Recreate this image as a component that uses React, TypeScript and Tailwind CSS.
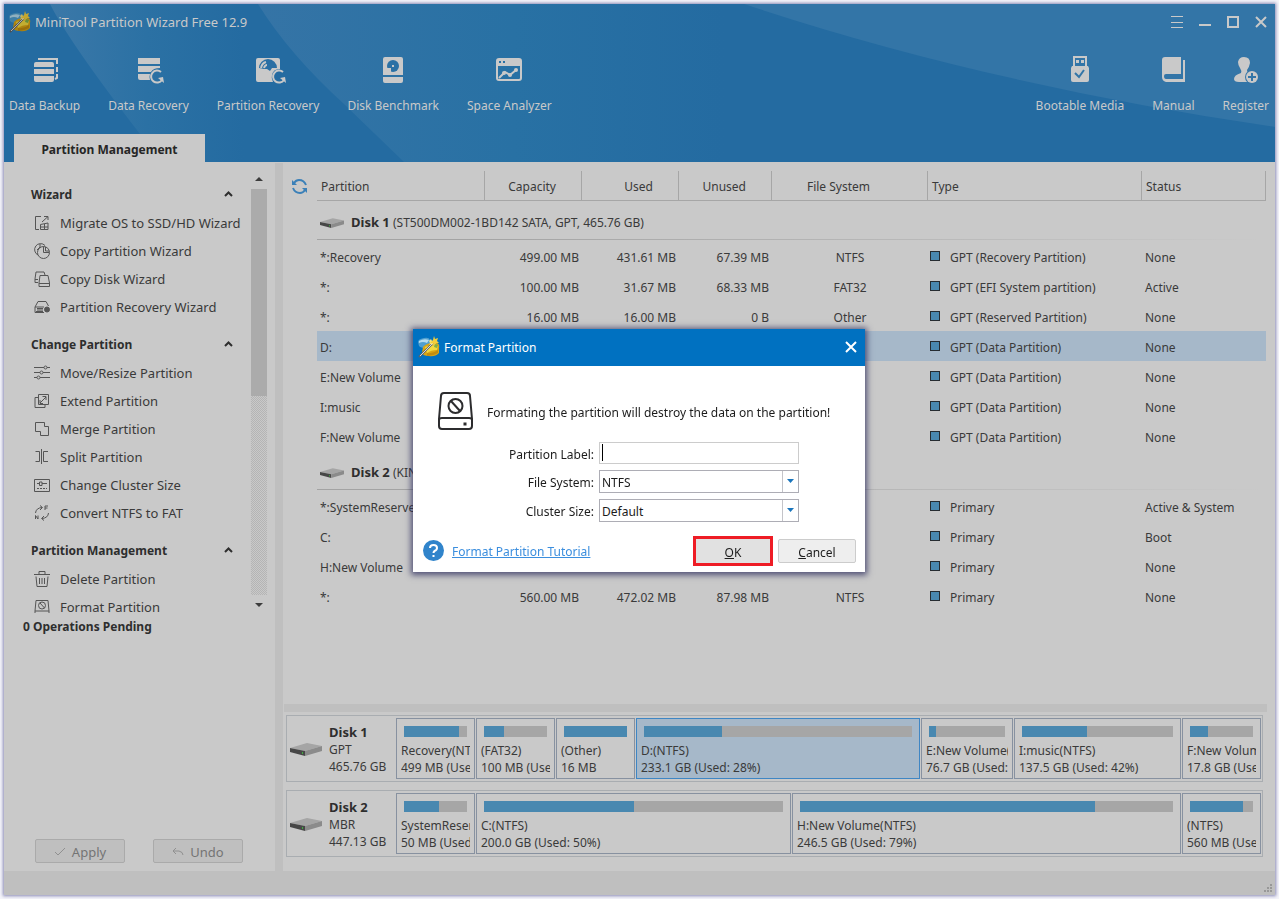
import { ReactNode } from "react";

const line = {
  fill: "none",
  stroke: "currentColor",
  strokeWidth: 1,
} as const;

/* ---------- logo ---------- */

function Logo() {
  return (
    <svg width="22" height="22" viewBox="0 0 22 22" className="shrink-0" aria-hidden="true">
      <path d="M0 6Q0 3 6 2Q11 1 12 4V9L8 12Q3 12 1 10Z" fill="#4f9fcf" />
      <path d="M1 5Q6 2 11 4L9 7Q5 5 1 7Z" fill="#b4dcef" />
      <path d="M5 11Q10 6 19 7Q22 8 21 12L21 17Q17 21 11 20Q5 20 4 17Z" fill="#d9a514" />
      <path d="M7 11Q13 8 20 10L19 14Q13 14 9 17Z" fill="#f3d93f" />
      <path d="M9 17Q15 18 20 14L20 17Q15 20 9 20Z" fill="#c08c10" />
      <path d="M1 21L15 7" stroke="#5f6468" strokeWidth="2" />
      <path d="M2 20L14 8" stroke="#d5dade" strokeWidth="1" />
      <path d="M11 5L13 3L14 5L16 5L15 7L16 9L13 8L11 9L12 7Z" fill="#f6e27a" />
      <path d="M16 0L17 3L20 2L19 5L21 7L18 7L17 10L15 7L12 7L15 4Z" fill="#f3cf3c" />
      <path d="M17 8L20 9L19 12L16 11Z" fill="#7fb04a" />
    </svg>
  );
}

/* ---------- toolbar ---------- */

const toolIcon: Record<string, ReactNode> = {
  backup: (
    <>
      <path d="M3 8Q3 6 5 6H21Q23 6 23 8V11H3ZM3 13H23V18H3ZM3 20H23V24Q23 26 21 26H5Q3 26 3 24Z" fill="#c9c9c9" />
      <path d="M7 3H26V8M26 11V16M26 18V22L24 23" fill="none" stroke="#c9c9c9" strokeWidth="2" />
    </>
  ),
  recovery: (
    <>
      <path d="M3 2H25V8H3ZM3 10H25V12Q18 12 16 16H3ZM3 18H15Q14 21 15 24H5Q3 24 3 22Z" fill="#c9c9c9" />
      <path d="M26 16A6 6 0 1 0 27 24" fill="none" stroke="#c9c9c9" strokeWidth="2" />
      <path d="M29 27L28 21L23 22Z" fill="#c9c9c9" />
    </>
  ),
  partition: (
    <>
      <path d="M4 2H24Q26 2 26 4V13Q19 13 18 19Q17 22 19 26H4Q2 26 2 24V4Q2 2 4 2Z" fill="#c9c9c9" />
      <path d="M5 12A9 9 0 0 1 23 12H18L16 15L13 13L10 13Z" fill="#2a6fa4" />
      <path d="M7 12Q8 7 12 6M10 12Q11 9 13 9" fill="none" stroke="#c9c9c9" strokeWidth="2" />
      <path d="M29 16A6 6 0 1 0 30 24" fill="none" stroke="#c9c9c9" strokeWidth="2" />
      <path d="M32 27L31 21L26 22Z" fill="#c9c9c9" />
    </>
  ),
  benchmark: (
    <>
      <path d="M6 1H22Q24 1 24 3V19H4V3Q4 1 6 1ZM4 21H24V25Q24 27 22 27H6Q4 27 4 25Z" fill="#c9c9c9" />
      <circle cx="14" cy="10" r="6" fill="#2b71a5" />
      <path d="M8 12H12V16H8Z" fill="#c9c9c9" />
      <rect x="13" y="9" width="2" height="2" fill="#c9c9c9" />
    </>
  ),
  analyzer: (
    <>
      <rect x="2" y="3" width="24" height="21" rx="2" fill="none" stroke="#c9c9c9" strokeWidth="2" />
      <path d="M2 3H26V10H2Z" fill="#c9c9c9" />
      <path d="M4 5H6V7H4ZM8 5H10V7H8Z" fill="#2870a4" />
      <path d="M4 22L10 16L15 19L21 14" fill="none" stroke="#c9c9c9" strokeWidth="2" />
      <circle cx="9" cy="17" r="2" fill="#c9c9c9" />
      <circle cx="15" cy="19" r="2" fill="#c9c9c9" />
      <circle cx="21" cy="14" r="2" fill="#c9c9c9" />
    </>
  ),
  usb: (
    <>
      <path d="M7 0H21V10H7Z" fill="#c9c9c9" />
      <path d="M9 2H19V10H9Z" fill="#3375a7" />
      <path d="M10 4H13V7H10ZM15 4H18V7H15Z" fill="#c9c9c9" />
      <path d="M6 10H22L23 12V24Q23 26 21 26H7Q5 26 5 24V12Z" fill="#c9c9c9" />
      <path d="M9 17L13 21L18 14" fill="none" stroke="#3375a7" strokeWidth="2" />
    </>
  ),
  manual: (
    <>
      <path d="M6 1H22V18H7Q5 18 5 20Q5 23 7 23H24V4H26V26H7Q3 25 3 21V4Q3 1 6 1Z" fill="#c9c9c9" />
      <path d="M23 1V23M6 21H23" fill="none" stroke="#3375a7" strokeWidth="2" />
    </>
  ),
  register: (
    <>
      <path d="M12 1Q18 1 18 7Q17 12 15 14Q15 17 18 17L16 26H7Q2 26 2 23Q2 19 9 17Q10 15 8 12Q6 9 6 6Q7 1 12 1Z" fill="#c9c9c9" />
      <circle cx="20" cy="21" r="7" fill="#3375a7" />
      <circle cx="20" cy="21" r="6" fill="#c9c9c9" />
      <path d="M20 17V25M16 21H24" stroke="#3375a7" strokeWidth="2" />
    </>
  ),
};

function Tool({ icon, label }: { icon: string; label: string }) {
  return (
    <button type="button" className="flex flex-col items-center gap-3 whitespace-nowrap">
      <svg width="28" height="28" viewBox="0 0 28 28" className="overflow-visible" aria-hidden="true">
        {toolIcon[icon]}
      </svg>
      <span className="leading-5">{label}</span>
    </button>
  );
}

function HeaderBackdrop() {
  return (
    <svg
      className="pointer-events-none absolute inset-0 h-full w-full"
      viewBox="0 0 1271 158"
      preserveAspectRatio="none"
      aria-hidden="true"
    >
      <defs>
        <linearGradient id="rayLeft" x1="0" x2="1" y1="0" y2="0">
          <stop offset="0" stopColor="#3b78a8" />
          <stop offset="0.5" stopColor="#2b71a4" />
          <stop offset="1" stopColor="#246ba1" />
        </linearGradient>
        <linearGradient id="rayMid" x1="0" x2="1" y1="0" y2="0">
          <stop offset="0" stopColor="#3574a6" />
          <stop offset="0.55" stopColor="#2871a4" />
          <stop offset="1" stopColor="#246ba1" />
        </linearGradient>
      </defs>
      <rect width="1271" height="158" fill="#246ba1" />
      <path d="M46 0Q66 40 146 143L150 158H240V0Z" fill="url(#rayLeft)" />
      <path d="M254 0Q285 50 340 100L400 158H720V0Z" fill="url(#rayMid)" />
      <path d="M740 0Q980 80 1271 123V0Z" fill="#3375a7" />
    </svg>
  );
}

function Header() {
  return (
    <header className="relative bg-[#246ba1] text-[#c9c9c9]">
      <HeaderBackdrop />
      <div className="relative">
        <div className="flex h-9 items-center pr-2 pl-[5px]">
          <span className="brightness-80">
            <Logo />
          </span>
          <h1 className="ml-1 flex-1 pt-[2px] text-[13px]">MiniTool Partition Wizard Free 12.9</h1>
          <div className="flex items-center gap-4">
            <button type="button" aria-label="Menu">
              <svg width="12" height="12" viewBox="0 0 12 12" {...line}>
                <path d="M0 .5H12M0 6.500H12M0 11.500H12" />
              </svg>
            </button>
            <button type="button" aria-label="Minimize">
              <svg width="12" height="12" viewBox="0 0 12 12" {...line}>
                <path d="M0 9H12" strokeWidth="2" />
              </svg>
            </button>
            <button type="button" aria-label="Maximize">
              <svg width="12" height="12" viewBox="0 0 12 12" {...line}>
                <path d="M1 1H11V11H1Z" strokeWidth="2" />
              </svg>
            </button>
            <button type="button" aria-label="Close">
              <svg width="12" height="12" viewBox="0 0 12 12" {...line}>
                <path d="M1 1L11 11M11 1L1 11" strokeWidth="2" />
              </svg>
            </button>
          </div>
        </div>
        <nav className="flex justify-between pt-4 pr-[6px] pl-[5px]">
          <div className="flex gap-7">
            <Tool icon="backup" label="Data Backup" />
            <Tool icon="recovery" label="Data Recovery" />
            <Tool icon="partition" label="Partition Recovery" />
            <Tool icon="benchmark" label="Disk Benchmark" />
            <Tool icon="analyzer" label="Space Analyzer" />
          </div>
          <div className="flex gap-7">
            <Tool icon="usb" label="Bootable Media" />
            <Tool icon="manual" label="Manual" />
            <Tool icon="register" label="Register" />
          </div>
        </nav>
        <div className="mt-[18px] flex px-[10px]">
          <button type="button" className="h-7 w-[191px] bg-[#c9c9c9] pt-1 font-bold text-[#262626]">
            Partition Management
          </button>
        </div>
      </div>
    </header>
  );
}

/* ---------- sidebar ---------- */

const sideIcon: Record<string, ReactNode> = {
  migrate: <path d="M7 1.500H1.500V14.500H5M8 7L14 1.500M10 1.500H14V5M6.500 9.500L14 8V14.500H6.500ZM6.500 12H14M10.500 9V14.500" />,
  copyPartition: (
    <>
      <path d="M4 12A6 6 0 1 1 11 2.500M6 1V4L3 7" />
      <circle cx="9.500" cy="9.500" r="6" />
      <path d="M9.500 3.500V9.500H15M11.500 4V8H15" />
    </>
  ),
  copyDisk: <path d="M4 11.500H1V8L2 1H10L11 4M1 8.500H4M6 4.500H14L15.500 12V15.500H5V12ZM5 12.500H15.500" />,
  recoveryDrive: (
    <>
      <path d="M1 8L4 2.500H12L14.500 7M1 8H10M1 8V13.500H10M3 11H9M3 9.500H9" />
      <circle cx="13" cy="10.500" r="2.500" fill="currentColor" />
      <path d="M2 12.500H9" />
    </>
  ),
  move: (
    <>
      <path d="M0 2.500H10M13 2.500H16M0 7.500H6M9 7.500H16M0 12.500H3M6 12.500H16" />
      <circle cx="11.500" cy="2.500" r="1.500" />
      <circle cx="7.500" cy="7.500" r="1.500" />
      <circle cx="4.500" cy="12.500" r="1.500" />
    </>
  ),
  extend: <path d="M4 4.500H1V14.500H11V11M4.500 11.500V1.500H14.500V11.500H8M4.500 11.500H8M6 10L12 4M8.500 3.500H12V7M6 7V10.500H9" />,
  merge: <path d="M1.500 1.500H10.500V5.500H14.500V14.500H6.500V10.500H1.500Z" />,
  split: <path d="M7.500 0V15M1.500 2.500H5.500V12.500H1.500M14 2.500H9.500V12.500H14" />,
  cluster: (
    <>
      <path d="M.5 2.500H15.500V14.500H.5ZM3 6.500H5M8 6.500H13M5.500 5H8V8.500H5.500Z" />
      <path d="M3 11.500H13" strokeDasharray="2 1" />
    </>
  ),
  convert: (
    <>
      <path d="M1.500 8Q2 3 8 2.500M6 .5L8.500 2.500L6 5M14.500 8Q14 13 8 13.500M10 11L7.500 13.500L10 15.500" />
      <path d="M11 5V1H14M11 3H13.500M1.500 14V10.500L4 14V10.500" />
    </>
  ),
  trash: <path d="M0 3.500H16M5 3V.5H11V3M2 5.500L3 15.500H13L14 5.500M5.500 7V13M8 7V13M10.500 7V13" />,
  format: (
    <>
      <path d="M1 12L2 1.500H14L15 12V18H1ZM1 12H15M12 15.500H13.500" />
      <circle cx="8" cy="6.500" r="3.500" />
      <path d="M6 4L10.500 9" />
    </>
  ),
};

const sections = [
  {
    title: "Wizard",
    items: [
      ["migrate", "Migrate OS to SSD/HD Wizard"],
      ["copyPartition", "Copy Partition Wizard"],
      ["copyDisk", "Copy Disk Wizard"],
      ["recoveryDrive", "Partition Recovery Wizard"],
    ],
  },
  {
    title: "Change Partition",
    items: [
      ["move", "Move/Resize Partition"],
      ["extend", "Extend Partition"],
      ["merge", "Merge Partition"],
      ["split", "Split Partition"],
      ["cluster", "Change Cluster Size"],
      ["convert", "Convert NTFS to FAT"],
    ],
  },
  {
    title: "Partition Management",
    items: [
      ["trash", "Delete Partition"],
      ["format", "Format Partition"],
    ],
  },
];

function Sidebar() {
  return (
    <aside className="flex w-[271px] shrink-0 flex-col">
      <div className="flex h-[450px] pt-2 pr-2">
        <div className="flex flex-1 flex-col gap-2 overflow-hidden pt-2 pl-[27px]">
          {sections.map((s) => (
            <section key={s.title} className="shrink-0">
              <h2 className="flex h-[30px] items-center justify-between pr-[18px] font-bold text-[#2e2e2e]">
                <span className="pt-[2px]">{s.title}</span>
                <svg width="9" height="9" viewBox="0 0 9 9" fill="none" stroke="#2e2e2e" strokeWidth="2" aria-hidden="true">
                  <path d="M1 6L4.500 2.500L8 6" />
                </svg>
              </h2>
              <ul className="text-[13px]">
                {s.items.map(([icon, label]) => (
                  <li key={label}>
                    <button type="button" className="flex h-7 items-center gap-[10px] pl-[3px] whitespace-nowrap">
                      <svg width="16" height="16" viewBox="0 0 16 16" className="overflow-visible text-[#555]" {...line} aria-hidden="true">
                        {sideIcon[icon]}
                      </svg>
                      <span className="pt-[2px]">{label}</span>
                    </button>
                  </li>
                ))}
              </ul>
            </section>
          ))}
        </div>
        <div className="flex w-4 flex-col" aria-hidden="true">
          <svg width="16" height="18" viewBox="0 0 16 18" className="shrink-0">
            <path d="M4 10L8 6L12 10Z" fill="#3c3c3c" />
          </svg>
          <div className="h-[207px] bg-[#ababab]" />
          <div className="flex-1 bg-[repeating-conic-gradient(#b4b4b4_0_25%,#c9c9c9_0_50%)] bg-[length:2px_2px]" />
          <svg width="16" height="18" viewBox="0 0 16 18" className="shrink-0">
            <path d="M4 8L8 12L12 8Z" fill="#3c3c3c" />
          </svg>
        </div>
      </div>
      <p className="pt-1 pl-[19px] leading-5 font-bold text-[#2e2e2e]">0 Operations Pending</p>
      <div className="mt-auto flex gap-7 pb-2 pl-[31px] text-[13px] text-[#747474]">
        <button type="button" className="flex h-6 w-[90px] items-center justify-center gap-[6px] rounded-xs border border-[#aaa] bg-[#bfbfbf] pt-1">
          <svg width="12" height="12" viewBox="0 0 12 12" fill="none" stroke="#909090" strokeWidth="1" aria-hidden="true">
            <path d="M1 5L4 8L11 1" />
          </svg>
          Apply
        </button>
        <button type="button" className="flex h-6 w-[90px] items-center justify-center gap-[6px] rounded-xs border border-[#aaa] bg-[#bfbfbf] pt-1">
          <svg width="12" height="12" viewBox="0 0 12 12" fill="none" stroke="#909090" strokeWidth="1" aria-hidden="true">
            <path d="M4 1L1 4L4 7M1 4H7Q11 5 11 8" />
          </svg>
          Undo
        </button>
      </div>
    </aside>
  );
}

/* ---------- partition table ---------- */

type Row = [name: string, capacity: string, used: string, unused: string, fs: string, type: string, status: string];

const disks: { name: string; info: string; rows: Row[] }[] = [
  {
    name: "Disk 1",
    info: "(ST500DM002-1BD142 SATA, GPT, 465.76 GB)",
    rows: [
      ["*:Recovery", "499.00 MB", "431.61 MB", "67.39 MB", "NTFS", "GPT (Recovery Partition)", "None"],
      ["*:", "100.00 MB", "31.67 MB", "68.33 MB", "FAT32", "GPT (EFI System partition)", "Active"],
      ["*:", "16.00 MB", "16.00 MB", "0 B", "Other", "GPT (Reserved Partition)", "None"],
      ["D:", "", "", "", "", "GPT (Data Partition)", "None"],
      ["E:New Volume", "", "", "", "", "GPT (Data Partition)", "None"],
      ["I:music", "", "", "", "", "GPT (Data Partition)", "None"],
      ["F:New Volume", "", "", "", "", "GPT (Data Partition)", "None"],
    ],
  },
  {
    name: "Disk 2",
    info: "(KIN",
    rows: [
      ["*:SystemReserved", "", "", "", "", "Primary", "Active & System"],
      ["C:", "", "", "", "", "Primary", "Boot"],
      ["H:New Volume", "", "", "", "", "Primary", "None"],
      ["*:", "560.00 MB", "472.02 MB", "87.98 MB", "NTFS", "Primary", "None"],
    ],
  },
];

function DriveIcon({ large }: { large?: boolean }) {
  return (
    <svg width={large ? 32 : 24} height={large ? 13 : 10} viewBox="0 0 32 13" className="shrink-0" aria-hidden="true">
      <path d="M0 5L17 0L32 3L15 8Z" fill="#a5a5a5" />
      <path d="M0 5L15 8V13L0 9Z" fill="#474747" />
      <path d="M15 8L32 3V8L15 13Z" fill="#8b8b8b" />
      <path d="M12 9H13V11H12Z" fill="#3fae3f" />
    </svg>
  );
}

function PartitionTable() {
  const th = "border-r border-b border-[#a6a6a6] p-0 pt-[2px] font-normal";
  return (
    <div className="flex flex-1 pt-2 pr-[9px] pl-2">
      <button type="button" aria-label="Refresh" className="flex h-[30px] w-[26px] shrink-0 items-center">
        <svg width="17" height="17" viewBox="0 0 17 17" fill="none" stroke="#3b80b8" strokeWidth="2" aria-hidden="true">
          <path d="M3 5Q5 2 8 2Q13 2 15 7M14 12Q12 15 9 15Q4 15 2 10" />
          <path d="M1 2V7H6Z" fill="#3b80b8" stroke="none" />
          <path d="M16 15V10H11Z" fill="#3b80b8" stroke="none" />
        </svg>
      </button>
      <div className="min-w-0 flex-1">
        <table className="w-full table-fixed border-separate border-spacing-0 whitespace-nowrap">
          <colgroup>
            <col className="w-[168px]" />
            <col className="w-[97px]" />
            <col className="w-[97px]" />
            <col className="w-[93px]" />
            <col className="w-[156px]" />
            <col className="w-[214px]" />
            <col className="w-[124px]" />
          </colgroup>
          <thead>
            <tr className="h-[30px]">
              <th className={`${th} pl-1 text-left`}>Partition</th>
              <th className={`${th} pr-[25px] text-right`}>Capacity</th>
              <th className={`${th} pr-[25px] text-right`}>Used</th>
              <th className={`${th} pr-[25px] text-right`}>Unused</th>
              <th className={`${th} pr-[22px]`}>File System</th>
              <th className={`${th} pl-1 text-left`}>Type</th>
              <th className={`${th} pl-1 text-left`}>Status</th>
            </tr>
          </thead>
          {disks.map((disk) => (
            <tbody key={disk.name}>
              <tr>
                <td colSpan={7} className="p-0">
                  <div className="flex h-[38px] items-center gap-[7px] pt-[6px] pl-[3px]">
                    <DriveIcon />
                    <span>
                      <b className="text-[13px] text-[#2e2e2e]">{disk.name}</b> {disk.info}
                    </span>
                  </div>
                  <div className="mb-px h-px bg-linear-to-r from-[#a3a3a3] from-15% to-[#c9c9c9]" />
                </td>
              </tr>
              {disk.rows.map((r, i) => (
                <tr key={i} className={r[0] === "D:" ? "h-[30px] bg-[#a6b8c9]" : "h-[30px]"}>
                  <td className="p-0 pt-[3px] pl-[3px]">{r[0]}</td>
                  <td className="p-0 pt-[3px] pr-[3px] text-right">{r[1]}</td>
                  <td className="p-0 pt-[3px] pr-[3px] text-right">{r[2]}</td>
                  <td className="p-0 pt-[3px] pr-[3px] text-right">{r[3]}</td>
                  <td className="p-0 pt-[3px] text-center">{r[4]}</td>
                  <td className="p-0 pt-[3px] pl-[2px]">
                    <span className="flex items-center gap-[10px]">
                      <i className="mb-[3px] size-[10px] border border-[#262c31] bg-[#4988b0]" />
                      {r[5]}
                    </span>
                  </td>
                  <td className="p-0 pt-[3px] pl-[3px]">{r[6]}</td>
                </tr>
              ))}
            </tbody>
          ))}
        </table>
      </div>
    </div>
  );
}

/* ---------- disk map ---------- */

type Part = { name: string; size: string; used: number; width: number; active?: boolean };

const maps: { name: string; scheme: string; size: string; parts: Part[] }[] = [
  {
    name: "Disk 1",
    scheme: "GPT",
    size: "465.76 GB",
    parts: [
      { name: "Recovery(NTFS)", size: "499 MB (Used: 86%)", used: 88, width: 79 },
      { name: "(FAT32)", size: "100 MB (Used: 31%)", used: 32, width: 79 },
      { name: "(Other)", size: "16 MB", used: 100, width: 79 },
      { name: "D:(NTFS)", size: "233.1 GB (Used: 28%)", used: 29, width: 284, active: true },
      { name: "E:New Volume(NTFS)", size: "76.7 GB (Used: 9%)", used: 9, width: 92 },
      { name: "I:music(NTFS)", size: "137.5 GB (Used: 42%)", used: 43, width: 167 },
      { name: "F:New Volume(NTFS)", size: "17.8 GB (Used: 28%)", used: 28, width: 79 },
    ],
  },
  {
    name: "Disk 2",
    scheme: "MBR",
    size: "447.13 GB",
    parts: [
      { name: "SystemReserved(NTFS)", size: "50 MB (Used: 55%)", used: 55, width: 79 },
      { name: "C:(NTFS)", size: "200.0 GB (Used: 50%)", used: 50, width: 315 },
      { name: "H:New Volume(NTFS)", size: "246.5 GB (Used: 79%)", used: 79, width: 389 },
      { name: "(NTFS)", size: "560 MB (Used: 84%)", used: 84, width: 79 },
    ],
  },
];

function DiskMap() {
  return (
    <div className="flex flex-col gap-2 pt-[3px] pr-3 pb-[14px] pl-[3px] leading-[17px]">
      {maps.map((m) => (
        <div key={m.name} className="flex h-[67px] border border-[#a9adb1] py-[2px] pr-px pl-[2px]">
          <div className="flex w-[107px] shrink-0 items-center gap-[7px] pt-[2px] pl-px">
            <DriveIcon large />
            <div className="whitespace-nowrap">
              <b className="text-[13px] text-[#2e2e2e]">{m.name}</b>
              <div>{m.scheme}</div>
              <div>{m.size}</div>
            </div>
          </div>
          <div
            className="grid min-w-0 flex-1 gap-px"
            style={{ gridTemplateColumns: m.parts.map((p) => `minmax(0, ${p.width}fr)`).join(" ") }}
          >
            {m.parts.map((p) => (
              <button
                type="button"
                key={p.name}
                className={
                  p.active
                    ? "border border-[#3f86c4] bg-[#a6b8c9] px-1 pt-1 text-left"
                    : "border border-[#8791a0] px-1 pt-1 text-left"
                }
              >
                <span className="mx-[3px] mb-[5px] block h-[11px] bg-[#a6a6a6]">
                  <span className="block h-full bg-[#4988b0]" style={{ width: `${p.used}%` }} />
                </span>
                <span className="block overflow-hidden whitespace-nowrap">{p.name}</span>
                <span className="block overflow-hidden whitespace-nowrap">{p.size}</span>
              </button>
            ))}
          </div>
        </div>
      ))}
    </div>
  );
}

/* ---------- dialog ---------- */

function SelectField({ id, label, value }: { id: string; label: string; value: string }) {
  return (
    <>
      <label htmlFor={id} className="pt-1 text-right">{label}</label>
      <div className="relative">
        <select
          id={id}
          defaultValue={value}
          className="block h-[23px] w-full appearance-none border border-[#adadb5] bg-white pt-1 pl-[2px] outline-none"
        >
          <option>{value}</option>
        </select>
        <span className="pointer-events-none absolute inset-y-px right-px flex w-4 items-center justify-center border-l border-[#c4c4c9]">
          <svg width="7" height="4" viewBox="0 0 7 4" aria-hidden="true">
            <path d="M0 0H7L3.500 4Z" fill="#1a75bc" />
          </svg>
        </span>
      </div>
    </>
  );
}

function FormatDialog() {
  return (
    <div className="fixed inset-0 flex items-center justify-center pt-px pr-px">
      <div
        role="dialog"
        aria-label="Format Partition"
        className="w-[452px] bg-white text-[#1c1c1c] shadow-[0_1px_6px_2px_rgba(40,40,90,0.75)]"
      >
        <div className="flex h-[37px] items-center bg-[#0071c1] pr-2 pl-[5px] text-white">
          <Logo />
          <h2 className="ml-1 flex-1 pt-[2px]">Format Partition</h2>
          <button type="button" aria-label="Close dialog">
            <svg width="12" height="12" viewBox="0 0 12 12" {...line} strokeWidth="2">
              <path d="M1 1L11 11M11 1L1 11" />
            </svg>
          </button>
        </div>

        <div className="flex items-center gap-[14px] pt-[26px] pl-[25px]">
          <svg width="35" height="38" viewBox="0 0 35 38" fill="none" stroke="#2c2c2e" strokeWidth="2" aria-hidden="true">
            <path d="M6 1H29Q32 1 32 4L34 27V34Q34 37 31 37H4Q1 37 1 34V27L3 4Q3 1 6 1Z" />
            <path d="M1 28Q1 26 4 26H31Q34 26 34 28" />
            <circle cx="17.500" cy="14" r="7" />
            <path d="M13 9L22 19" />
            <rect x="26" y="31" width="2" height="2" fill="#2c2c2e" strokeWidth="1" />
          </svg>
          <p className="pt-1 whitespace-nowrap">Formating the partition will destroy the data on the partition!</p>
        </div>

        <div className="mt-3 grid grid-cols-[181px_200px] items-center gap-x-[5px] gap-y-[6px]">
          <label htmlFor="label" className="pt-1 text-right">Partition Label:</label>
          <div className="flex h-[22px] items-center border border-[#ccc] pl-[2px]">
            <span className="h-[17px] w-px bg-black" />
            <input id="label" type="text" className="h-full min-w-0 flex-1 bg-transparent outline-none" />
          </div>
          <SelectField id="fs" label="File System:" value="NTFS" />
          <SelectField id="cluster" label="Cluster Size:" value="Default" />
        </div>

        <div className="mt-[14px] flex items-center pr-[9px] pb-[6px] pl-[10px]">
          <svg width="21" height="21" viewBox="0 0 21 21" className="mr-2" aria-hidden="true">
            <circle cx="10.500" cy="10.500" r="10.500" fill="#3084cb" />
            <path d="M7 8Q7 5 10.500 5Q14 5 14 8Q14 10 11.500 11Q10.500 12 10.500 13" fill="none" stroke="#fff" strokeWidth="2" />
            <rect x="9.500" y="15" width="2" height="2" fill="#fff" />
          </svg>
          <a href="#tutorial" className="pt-[2px] text-[#3b8ede] underline">Format Partition Tutorial</a>
          <button type="button" className="ml-auto h-[30px] w-20 border-3 border-[#ee1c25] bg-[#e1e1e1] pt-1">
            <u>O</u>K
          </button>
          <button type="button" className="ml-[5px] h-6 w-[78px] rounded-xs border border-[#ccc] bg-[#eee] pt-1">
            <u>C</u>ancel
          </button>
        </div>
      </div>
    </div>
  );
}

export default function App() {
  return (
    <div className="flex min-h-screen flex-col bg-[#f4f4fa] p-1 font-['Noto_Sans',sans-serif] text-xs text-[#3a3a3a]">
      <div className="flex flex-1 flex-col bg-[#c9c9c9] shadow-[0_0_3px_1px_#8888b4]">
        <Header />
        <div className="flex flex-1 pt-px">
          <Sidebar />
          <div className="w-2 shrink-0 bg-[#bfbfbf]" />
          <main className="flex min-w-0 flex-1 flex-col">
            <PartitionTable />
            <div className="mr-2 ml-px h-2 bg-[#bfbfbf]" />
            <DiskMap />
          </main>
        </div>
        <footer className="flex h-6 items-end justify-end bg-[#bfbfbf] p-[3px]">
          <svg width="8" height="8" viewBox="0 0 8 8" fill="#989898" aria-hidden="true">
            <path d="M6 0H8V2H6ZM3 3H5V5H3ZM6 3H8V5H6ZM0 6H2V8H0ZM3 6H5V8H3ZM6 6H8V8H6Z" />
          </svg>
        </footer>
      </div>
      <FormatDialog />
    </div>
  );
}
